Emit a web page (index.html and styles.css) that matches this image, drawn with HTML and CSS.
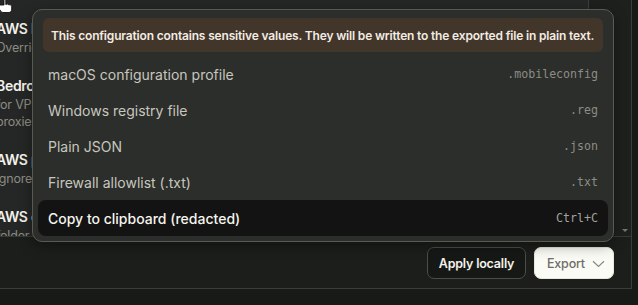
FILE: index.html
```html
<!DOCTYPE html>
<html>
<head>
<meta charset="utf-8">
<link rel="stylesheet" href="styles.css">
</head>
<body>
<div class="app">
  <div class="dialog">
    <div class="content">
      <div class="list">
        <div class="item">
          <div class="title">AWS bedrock</div>
          <div class="sub">Override region</div>
        </div>
        <div class="item">
          <div class="title">Bedrock endpoint</div>
          <div class="sub">for VPC endpoints</div>
          <div class="sub">proxies and gateways</div>
        </div>
        <div class="item">
          <div class="title">AWS profile</div>
          <div class="sub">ignored when keys set</div>
        </div>
        <div class="item">
          <div class="title">AWS config</div>
          <div class="sub">folder path</div>
        </div>
      </div>
      <div class="side">
        <span class="arrow"></span>
      </div>
    </div>
    <div class="footer">
      <button class="btn apply">Apply locally</button>
      <button class="btn export">Export
        <svg class="chev" width="13" height="8" viewBox="0 0 13 8"><path d="M1 1.2 L6.5 6.5 L12 1.2" fill="none" stroke="#8a8983" stroke-width="1.2"/></svg>
      </button>
    </div>
    <div class="popover">
      <div class="banner">This configuration contains sensitive values. They will be written to the exported file in plain text.</div>
      <div class="row"><span class="label">macOS configuration profile</span><span class="ext">.mobileconfig</span></div>
      <div class="row"><span class="label">Windows registry file</span><span class="ext">.reg</span></div>
      <div class="row"><span class="label">Plain JSON</span><span class="ext">.json</span></div>
      <div class="row"><span class="label">Firewall allowlist (.txt)</span><span class="ext">.txt</span></div>
      <div class="row active"><span class="label">Copy to clipboard (redacted)</span><span class="ext">Ctrl+C</span></div>
    </div>
  </div>
  <div class="below">
    <div class="below-left"></div>
    <div class="below-mid"></div>
    <div class="thumb"></div>
  </div>
</div>
<svg class="cursor" width="14" height="16" viewBox="0 0 14 16">
  <path d="M4 1.2 C4 0.4 5.8 0.4 5.8 1.2 L5.8 6.5 L6.4 6.5 C6.4 5.6 8 5.6 8 6.6 L8.3 6.8 C8.4 6 9.9 6 9.9 7 L10.1 7.3 C10.3 6.6 11.7 6.7 11.7 7.6 L11.7 11 C11.7 13 10.6 14.5 9 14.5 L3 14.5 C1.5 14.5 -0.5 12 -1 10 L-1 7 L4 7 Z" fill="#ffffff" stroke="#111" stroke-width="0.9"/>
</svg>
</body>
</html>
```

FILE: styles.css
```css
* { box-sizing: border-box; }
html, body { margin: 0; padding: 0; }
body {
  width: 638px;
  height: 305px;
  overflow: hidden;
  background: #181a18;
  font-family: Inter, "Noto Sans", sans-serif;
  position: relative;
}
.app { display: flex; flex-direction: column; }
.dialog {
  position: relative;
  width: 632px;
  height: 289px;
  border-right: 1px solid #3a3d38;
  border-bottom: 1px solid #3a3d38;
  display: flex;
  flex-direction: column;
}
.content {
  height: 236px;
  display: flex;
  overflow: hidden;
}
.list {
  width: 593px;
  background: #242725;
  border-right: 1px solid #3b3e3a;
  margin-left: -4px;
  padding-top: 9px;
}
.item { padding: 10px 0; }
.title {
  color: #f3f1ea;
  font-weight: 600;
  font-size: 14px;
  letter-spacing: -0.3px;
  line-height: 20px;
}
.sub {
  color: #8d8b84;
  font-size: 12.5px;
  letter-spacing: -0.2px;
  line-height: 17px;
}
.side {
  flex: 1;
  background: #1d201d;
  display: flex;
  justify-content: flex-end;
  align-items: flex-end;
  padding: 0 3px 4px 0;
}
.arrow {
  width: 0; height: 0;
  border-left: 3px solid transparent;
  border-right: 3px solid transparent;
  border-top: 3px solid #76766f;
}
.footer {
  flex: 1;
  background: #1b1e1b;
  border-top: 1px solid #363935;
  display: flex;
  justify-content: flex-end;
  align-items: flex-start;
  gap: 8px;
  padding: 10px 17px 0 0;
}
.btn {
  height: 32px;
  border-radius: 7px;
  font-family: Inter, "Noto Sans", sans-serif;
  font-size: 12.5px;
  letter-spacing: -0.2px;
  display: flex;
  align-items: center;
  cursor: pointer;
}
.apply {
  width: 99px;
  justify-content: center;
  background: #161816;
  border: 1px solid #4c4d47;
  color: #f4f2ea;
  font-weight: 600;
}
.export {
  width: 80px;
  padding: 0 0 0 12px;
  gap: 7px;
  background: #fbfbf5;
  border: 1px solid #e8e7df;
  color: #6e6d68;
  font-weight: 500;
}
.chev { margin-top: 1px; }
.popover {
  position: absolute;
  left: 32px;
  top: 9px;
  width: 582px;
  height: 233px;
  background: #2b2e2b;
  border: 1px solid #595a52;
  border-radius: 10px;
  padding: 8px 5px 5px;
  box-shadow: 0 4px 14px rgba(0,0,0,0.35);
}
.banner {
  margin: 0 5px 4px;
  height: 34px;
  background: #42352a;
  border-radius: 6px;
  color: #f1ece2;
  font-size: 12px;
  letter-spacing: -0.17px;
  font-weight: 600;
  padding: 0 8px;
  display: flex;
  align-items: center;
  white-space: nowrap;
}
.row {
  height: 36px;
  padding: 0 10px;
  border-radius: 8px;
  display: flex;
  align-items: center;
  justify-content: space-between;
}
.label {
  color: #c8c6be;
  font-size: 14px;
}
.ext {
  color: #8e8c85;
  font-family: "DejaVu Sans Mono", "Liberation Mono", monospace;
  font-size: 11.6px;
}
.row.active { background: #121312; }
.row.active .label { color: #f6f4ee; font-weight: 500; }
.row.active .ext { color: #a4a29b; }
.below {
  flex: 1;
  display: flex;
  height: 16px;
}
.below-left { width: 503px; background: #2a2d2a; }
.below-mid { width: 101px; }
.thumb { width: 5px; background: #6c6b64; }
.cursor {
  position: absolute;
  left: 0;
  top: -2px;
}
```
